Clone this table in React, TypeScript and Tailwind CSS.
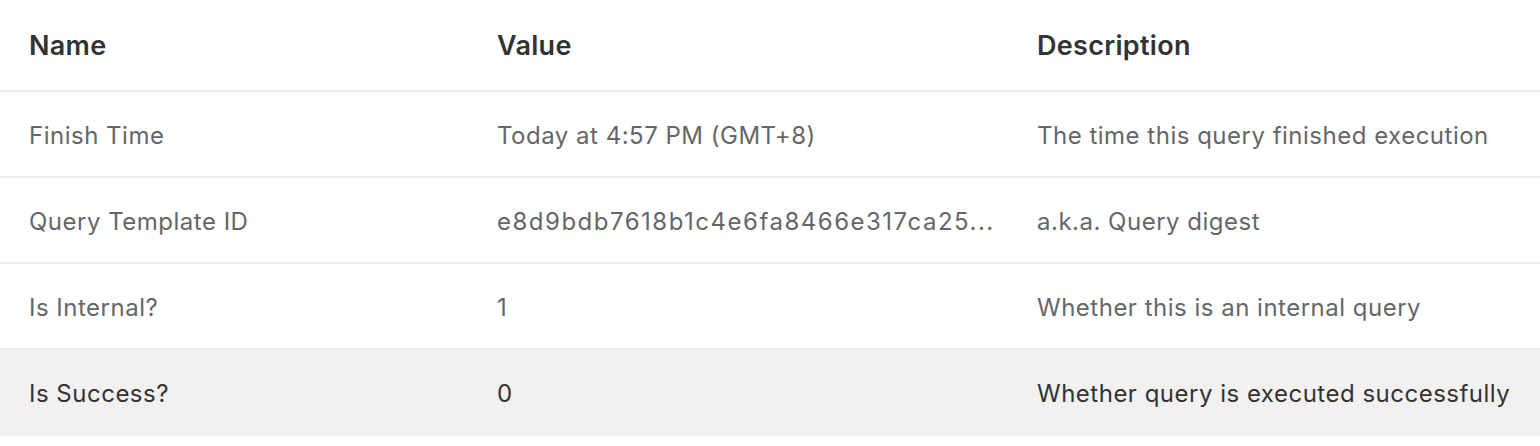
import React from "react";

const rows = [
  { name: "Finish Time", value: "Today at 4:57 PM (GMT+8)", desc: "The time this query finished execution" },
  { name: "Query Template ID", value: "e8d9bdb7618b1c4e6fa8466e317ca25...", desc: "a.k.a. Query digest", wide: true },
  { name: "Is Internal?", value: "1", desc: "Whether this is an internal query" },
  { name: "Is Success?", value: "0", desc: "Whether query is executed successfully", hover: true },
];

export default function App() {
  return (
    <div
      className="w-[1540px] h-[446px] bg-white overflow-hidden"
      style={{ fontFamily: "Inter, 'Noto Sans', sans-serif" }}
    >
      <div className="grid grid-cols-[468px_540px_1fr] h-[92px] pt-[2px] items-center border-b-2 border-[#ececec] text-[27px] tracking-[0.3px] font-semibold text-[#333]">
        <div className="pl-[29px]">Name</div>
        <div className="pl-[29px]">Value</div>
        <div className="pl-[29px]">Description</div>
      </div>
      {rows.map((r) => (
        <div
          key={r.name}
          className={
            r.hover
              ? "grid grid-cols-[468px_540px_1fr] h-[86px] pt-[4px] items-center border-b-2 border-[#f2f1f0] bg-[#f2f1f0] text-[24px] tracking-[0.5px] text-[#333]"
              : "grid grid-cols-[468px_540px_1fr] h-[86px] pt-[4px] items-center border-b-2 border-[#ececec] text-[24px] tracking-[0.5px] text-[#666]"
          }
        >
          <div className="pl-[29px] whitespace-nowrap">{r.name}</div>
          <div className={r.wide ? "pl-[29px] whitespace-nowrap tracking-[1.5px]" : "pl-[29px] whitespace-nowrap"}>{r.value}</div>
          <div className="pl-[29px] whitespace-nowrap">{r.desc}</div>
        </div>
      ))}
    </div>
  );
}
